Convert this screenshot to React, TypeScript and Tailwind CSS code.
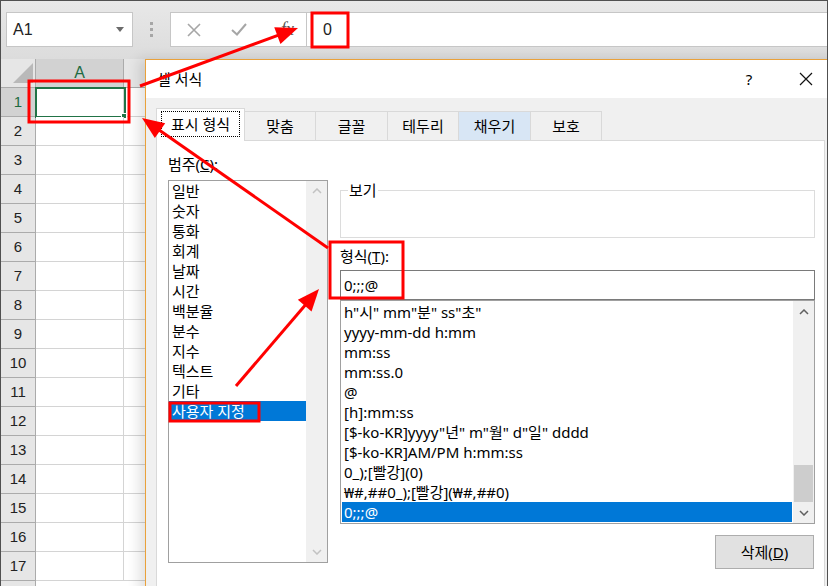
import React from "react";

const FONT = "font-['Liberation_Sans','Noto_Sans_CJK_KR',sans-serif]";
const UI_FONT = "font-['Noto_Sans','Noto_Sans_CJK_KR',sans-serif]";

type Pt = [number, number];

function Arrow({ from, to }: { from: Pt; to: Pt }) {
  const [x1, y1] = from;
  const [x2, y2] = to;
  const len = Math.hypot(x2 - x1, y2 - y1);
  const ux = (x2 - x1) / len;
  const uy = (y2 - y1) / len;
  const hl = 22;
  const hw = 9;
  const bx = x2 - ux * hl;
  const by = y2 - uy * hl;
  const pts = `${x2},${y2} ${bx - uy * hw},${by + ux * hw} ${bx + uy * hw},${by - ux * hw}`;
  return (
    <g>
      <line x1={x1} y1={y1} x2={bx + ux * 2} y2={by + uy * 2} stroke="#ff0000" strokeWidth={3} />
      <polygon points={pts} fill="#ff0000" />
    </g>
  );
}

function Chevron({ up, color }: { up?: boolean; color: string }) {
  return (
    <svg width="10" height="6" viewBox="0 0 10 6">
      <polyline
        points={up ? "1,5 5,1 9,5" : "1,1 5,5 9,1"}
        fill="none"
        stroke={color}
        strokeWidth={1.5}
      />
    </svg>
  );
}

const rows = Array.from({ length: 17 }, (_, i) => i + 1);

function Sheet() {
  return (
    <div className="flex flex-col">
      <div className="flex h-[29px]">
        <div className="flex w-[35px] items-end justify-end border-b border-r border-[#ababab] bg-[#e6e6e6] pb-[4px] pr-[2px]">
          <svg width="20" height="20" viewBox="0 0 20 20">
            <polygon points="20,0 20,20 0,20" fill="#b9b9b9" />
          </svg>
        </div>
        <div className="flex w-[88px] items-center justify-center border-b border-r border-[#ababab] bg-[#d2d2d2] text-[16px] text-[#1e6b41]">
          A
        </div>
        <div className="flex-1 border-b border-[#ababab] bg-[#e6e6e6]" />
      </div>
      {rows.map((r) => (
        <div key={r} className="flex h-[29px]">
          <div
            className={`flex w-[35px] items-center justify-center border-b border-r border-[#ababab] text-[15px] ${
              r === 1 ? "bg-[#d2d2d2] text-[#1e6b41]" : "bg-[#e6e6e6] text-[#222]"
            }`}
          >
            {r}
          </div>
          <div className="relative w-[88px] border-b border-r border-[#d4d4d4] bg-white">
            {r === 1 && (
              <div className="absolute -left-[1px] -top-[1px] h-[31px] w-[91px] border-2 border-[#217346]">
                <div className="absolute -bottom-[3px] -right-[3px] h-[6px] w-[6px] border border-white bg-[#217346]" />
              </div>
            )}
          </div>
          <div className="flex-1 border-b border-[#d4d4d4] bg-white" />
        </div>
      ))}
      <div className="flex h-[6px]">
        <div className="w-[35px] border-r border-[#ababab] bg-[#e6e6e6]" />
        <div className="flex-1 bg-white" />
      </div>
    </div>
  );
}

const categories = ["일반", "숫자", "통화", "회계", "날짜", "시간", "백분율", "분수", "지수", "텍스트", "기타", "사용자 지정"];

const formats = [
  'h"시" mm"분" ss"초"',
  "yyyy-mm-dd h:mm",
  "mm:ss",
  "mm:ss.0",
  "@",
  "[h]:mm:ss",
  '[$-ko-KR]yyyy"년" m"월" d"일" dddd',
  "[$-ko-KR]AM/PM h:mm:ss",
  "0_);[빨강](0)",
  "₩#,##0_);[빨강](₩#,##0)",
  "0;;;@",
];

const tabs = [
  { label: "맞춤", w: "w-[71px]", bg: "bg-[#f0f0f0]" },
  { label: "글꼴", w: "w-[72px]", bg: "bg-[#f0f0f0]" },
  { label: "테두리", w: "w-[71px]", bg: "bg-[#f0f0f0]" },
  { label: "채우기", w: "w-[72px]", bg: "bg-[#d8e6f5]" },
  { label: "보호", w: "w-[71px]", bg: "bg-[#f0f0f0]" },
];

function FormatDialog() {
  return (
    <div
      className={`absolute left-[144px] top-[58px] flex h-[540px] w-[700px] flex-col border-l border-t border-[#e9a13b] bg-[#f0f0f0] shadow-[-6px_0_12px_rgba(0,0,0,0.12)] ${UI_FONT}`}
    >
      {/* title bar */}
      <div className="flex h-[38px] items-center bg-white pl-[11px] text-[15px] text-black">
        <span>셀 서식</span>
        <div className="ml-auto flex items-center pr-[24px]">
          <span className="w-[30px] text-center text-[15px]">?</span>
          <span className="w-[27px]" />
          <span className="flex w-[30px] justify-center">
            <svg width="14" height="14" viewBox="0 0 14 14">
              <path d="M1 1L13 13M13 1L1 13" stroke="#111" strokeWidth={1.2} />
            </svg>
          </span>
        </div>
      </div>

      {/* tabs */}
      <div className="flex h-[42px] items-end pl-[10px] text-[15px] text-black">
        <div className="relative z-10 -mb-px flex h-[33px] w-[89px] items-start justify-center border-l border-r border-t border-[#d9d9d9] bg-white pt-[2px]">
          <span className="border border-dotted border-black px-[9px] leading-[24px]">표시 형식</span>
        </div>
        {tabs.map((t) => (
          <div
            key={t.label}
            className={`flex h-[29px] items-center justify-center border-r border-t border-[#d9d9d9] ${t.w} ${t.bg}`}
          >
            {t.label}
          </div>
        ))}
      </div>

      {/* panel */}
      <div className="ml-[10px] flex h-[448px] w-[669px] gap-[12px] border border-[#d9d9d9] bg-white pl-[11px] pt-[13px] text-[15px] text-black">
        <div className="flex w-[160px] flex-col">
          <div className="h-[20px] leading-[20px]">
            범주(<span className="underline">C</span>):
          </div>
          <div className="mt-[6px] flex h-[383px] border border-[#a0a0a0]">
            <div className="flex-1">
              {categories.map((c) => (
                <div
                  key={c}
                  className={`h-[20px] pl-[3px] leading-[20px] ${c === "사용자 지정" ? "bg-[#0078d7] text-white" : ""}`}
                >
                  {c}
                </div>
              ))}
            </div>
            <div className="flex w-[21px] flex-col justify-between bg-[#f0f0f0]">
              <div className="flex h-[20px] items-center justify-center">
                <Chevron up color="#c2c2c2" />
              </div>
              <div className="flex h-[20px] items-center justify-center">
                <Chevron color="#c2c2c2" />
              </div>
            </div>
          </div>
        </div>

        <div className="flex w-[475px] flex-col pt-[26px]">
          <fieldset className="h-[58px] border border-[#dcdcdc] px-[7px]">
            <legend className="px-px leading-[20px]">보기</legend>
          </fieldset>
          <div className="mt-[8px] h-[20px] leading-[20px]">
            형식(<span className="underline">T</span>):
          </div>
          <div className="mt-[4px] flex h-[30px] items-center border border-[#7a7a7a] pl-[3px]">0;;;@</div>
          <div className="flex h-[224px] border border-[#a0a0a0]">
            <div className="flex-1 px-px pt-px">
              {formats.map((f, i) => (
                <div
                  key={f}
                  className={`h-[20px] whitespace-nowrap pl-[2px] leading-[20px] ${
                    i === formats.length - 1 ? "bg-[#0078d7] text-white" : ""
                  }`}
                >
                  {f}
                </div>
              ))}
            </div>
            <div className="flex w-[21px] flex-col bg-[#f0f0f0] pt-px">
              <div className="flex h-[20px] items-center justify-center">
                <Chevron up color="#606060" />
              </div>
              <div className="flex-1" />
              <div className="mx-px h-[37px] bg-[#cdcdcd]" />
              <div className="flex h-[21px] items-center justify-center">
                <Chevron color="#606060" />
              </div>
            </div>
          </div>
          <button className="mt-[11px] mr-px flex h-[34px] w-[99px] items-center justify-center self-end border border-[#adadad] bg-[#e1e1e1] text-[15px] text-black">
            삭제(<span className="underline">D</span>)
          </button>
        </div>
      </div>
    </div>
  );
}

export default function App() {
  return (
    <div className={`relative h-[586px] w-[828px] overflow-hidden border-x border-t border-[#505050] bg-white ${FONT}`}>
      {/* formula bar */}
      <div className="flex h-[58px] items-start bg-gradient-to-b from-[#e8e8e8] to-[#dcdcdc] pt-[11px]">
        <div className="ml-[5px] flex h-[35px] w-[127px] items-center justify-between border border-[#c6c6c6] bg-white pl-[6px] pr-[8px] text-[16px] text-[#222]">
          <span>A1</span>
          <svg width="8" height="5" viewBox="0 0 8 5">
            <polygon points="0,0 8,0 4,5" fill="#6b6b6b" />
          </svg>
        </div>
        <div className="flex h-[35px] w-[37px] flex-col items-center justify-center gap-[3px]">
          <div className="h-[3px] w-[3px] bg-[#a6a6a6]" />
          <div className="h-[3px] w-[3px] bg-[#a6a6a6]" />
          <div className="h-[3px] w-[3px] bg-[#a6a6a6]" />
        </div>
        <div className="flex h-[35px] flex-1 border-y border-l border-[#c6c6c6] bg-white">
          <div className="flex w-[136px] items-center border-r border-[#c6c6c6] pl-[16px]">
            <svg width="14" height="14" viewBox="0 0 14 14">
              <path d="M1 1L13 13M13 1L1 13" stroke="#a6a6a6" strokeWidth={1.6} />
            </svg>
            <svg className="ml-[30px]" width="16" height="13" viewBox="0 0 16 13">
              <path d="M1 7L6 11.5L15 1" fill="none" stroke="#a6a6a6" strokeWidth={2} />
            </svg>
            <span className="ml-[34px] font-['Liberation_Serif',serif] text-[18px] italic text-[#555]">fx</span>
          </div>
          <div className="flex flex-1 items-center pl-[16px] text-[16px] text-[#222]">0</div>
        </div>
      </div>

      <Sheet />
      <FormatDialog />

      {/* annotations */}
      <svg className="pointer-events-none absolute left-0 top-0 z-20" width="828" height="586">
        <rect x="311" y="12" width="36" height="34" fill="none" stroke="#ff0000" strokeWidth={3} />
        <rect x="28" y="80" width="100" height="41" fill="none" stroke="#ff0000" strokeWidth={3} />
        <rect x="329" y="241" width="73" height="56" fill="none" stroke="#ff0000" strokeWidth={3} />
        <rect x="169" y="402" width="89" height="18" fill="none" stroke="#ff0000" strokeWidth={3} />
        <Arrow from={[139, 85]} to={[297, 27]} />
        <Arrow from={[327, 247]} to={[141, 117]} />
        <Arrow from={[235, 385]} to={[318, 288]} />
      </svg>
    </div>
  );
}
